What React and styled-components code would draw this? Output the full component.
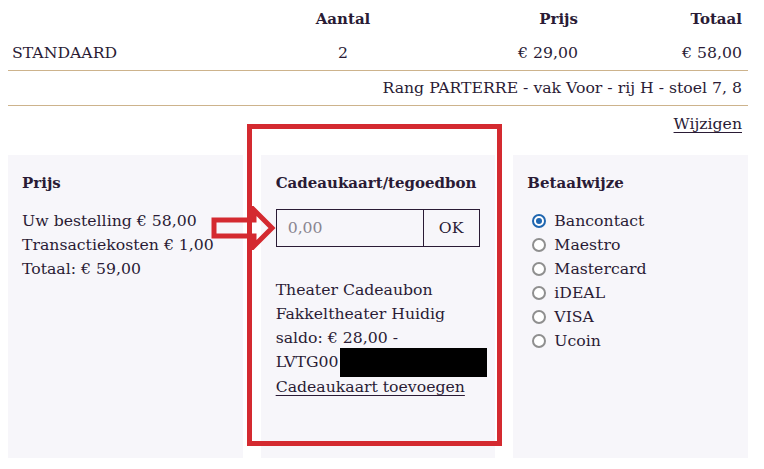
import React from 'react';
import styled, { createGlobalStyle } from 'styled-components';

const GlobalStyle = createGlobalStyle`
  html, body {
    margin: 0;
    padding: 0;
    background: #ffffff;
  }
  body {
    font-family: "DejaVu Serif", "Liberation Serif", serif;
    font-size: 15.7px;
    color: #2a1b35;
  }
`;

const Page = styled.div`
  position: relative;
  width: 764px;
  height: 469px;
  overflow: hidden;
  padding: 0 16px 0 8px;
  box-sizing: border-box;
`;

const OrderRow = styled.div`
  display: grid;
  grid-template-columns: 274px 114px 178px 164px;
  padding: ${p => p.$pad || '5px 6px 5px 4px'};
  line-height: 24px;
  border-bottom: ${p => (p.$line ? '1px solid #cdb38c' : 'none')};
  font-weight: ${p => (p.$head ? 700 : 400)};
  font-size: ${p => (p.$head ? '15px' : 'inherit')};
`;

const Cell = styled.div`
  text-align: ${p => p.$align || 'left'};
  white-space: nowrap;
`;

const InfoRow = styled.div`
  text-align: right;
  line-height: 24px;
  padding: ${p => p.$pad || '5px 6px 5px 4px'};
  border-bottom: ${p => (p.$line ? '1px solid #cdb38c' : 'none')};
`;

const Link = styled.a`
  color: #2a1b35;
  text-decoration: underline;
  text-underline-offset: 3px;
  cursor: pointer;
`;

const Panels = styled.div`
  display: grid;
  grid-template-columns: repeat(3, minmax(0, 1fr));
  gap: 18px;
  margin-top: 19px;
`;

const Panel = styled.div`
  background: #f7f6fa;
  height: 303px;
  padding: 16px 14px 16px ${p => p.$left || '14px'};
  box-sizing: border-box;
  line-height: 24px;
`;

const PanelTitle = styled.div`
  font-weight: 700;
  font-size: 15px;
  margin-bottom: 14px;
`;

const Line = styled.div`
  white-space: nowrap;
`;

const VoucherForm = styled.div`
  display: flex;
  width: 204px;
  height: 38px;
  margin-bottom: 31px;
`;

const VoucherInput = styled.input`
  flex: 1;
  min-width: 0;
  box-sizing: border-box;
  border: 1.5px solid #2a1b35;
  border-right: none;
  background: #f7f6fa;
  padding: 0 11px;
  font: inherit;
  color: #2a1b35;
  &::placeholder {
    color: #8a8590;
  }
`;

const OkButton = styled.button`
  width: 57px;
  box-sizing: border-box;
  border: 1.5px solid #2a1b35;
  background: #f7f6fa;
  font: inherit;
  color: #2a1b35;
  padding: 0;
`;

const Redacted = styled.span`
  display: inline-block;
  width: 147px;
  height: 29px;
  background: #000;
  vertical-align: middle;
  margin: -3px 0 -2px 1px;
`;

const RadioList = styled.div`
  display: flex;
  flex-direction: column;
`;

const RadioLabel = styled.label`
  display: flex;
  align-items: center;
  gap: 8px;
  margin-left: 5px;
  line-height: 24px;
`;

const RadioDot = styled.span`
  width: 14px;
  height: 14px;
  box-sizing: border-box;
  border-radius: 50%;
  border: 2px solid ${p => (p.$on ? '#1f66b0' : '#8f8f8f')};
  background: #fff;
  display: flex;
  align-items: center;
  justify-content: center;
  &::after {
    content: '';
    width: 6px;
    height: 6px;
    border-radius: 50%;
    background: ${p => (p.$on ? '#1f66b0' : 'transparent')};
  }
`;

const Highlight = styled.div`
  position: absolute;
  left: 247px;
  top: 124px;
  width: 255px;
  height: 322px;
  box-sizing: border-box;
  border: 5px solid #d42a30;
  pointer-events: none;
`;

const Arrow = styled.svg`
  position: absolute;
  left: 210px;
  top: 206px;
  pointer-events: none;
`;

const methods = ['Bancontact', 'Maestro', 'Mastercard', 'iDEAL', 'VISA', 'Ucoin'];

export default function App() {
  return (
    <>
      <GlobalStyle />
      <Page>
        <OrderRow $head $pad="7px 6px 5px 4px">
          <Cell />
          <Cell $align="center">Aantal</Cell>
          <Cell $align="right">Prijs</Cell>
          <Cell $align="right">Totaal</Cell>
        </OrderRow>
        <OrderRow $line>
          <Cell>STANDAARD</Cell>
          <Cell $align="center">2</Cell>
          <Cell $align="right">€ 29,00</Cell>
          <Cell $align="right">€ 58,00</Cell>
        </OrderRow>
        <InfoRow $line>Rang PARTERRE - vak Voor - rij H - stoel 7, 8</InfoRow>
        <InfoRow $pad="6px 6px 0 4px">
          <Link>Wijzigen</Link>
        </InfoRow>

        <Panels>
          <Panel>
            <PanelTitle>Prijs</PanelTitle>
            <Line>Uw bestelling € 58,00</Line>
            <Line>Transactiekosten € 1,00</Line>
            <Line>Totaal: € 59,00</Line>
          </Panel>
          <Panel $left="15px">
            <PanelTitle>Cadeaukaart/tegoedbon</PanelTitle>
            <VoucherForm>
              <VoucherInput placeholder="0,00" />
              <OkButton>OK</OkButton>
            </VoucherForm>
            <Line>Theater Cadeaubon</Line>
            <Line>Fakkeltheater Huidig</Line>
            <Line>saldo: € 28,00 -</Line>
            <Line>
              LVTG00<Redacted />
            </Line>
            <Line>
              <Link>Cadeaukaart toevoegen</Link>
            </Line>
          </Panel>
          <Panel>
            <PanelTitle>Betaalwijze</PanelTitle>
            <RadioList>
              {methods.map((m, i) => (
                <RadioLabel key={m}>
                  <RadioDot $on={i === 0} />
                  {m}
                </RadioLabel>
              ))}
            </RadioList>
          </Panel>
        </Panels>

        <Highlight />
        <Arrow width="66" height="44" viewBox="0 0 66 44">
          <path
            d="M4 14 H44 V4 L62 22 L44 40 V30 H4 Z"
            fill="none"
            stroke="#d42a30"
            strokeWidth="5"
            strokeLinejoin="miter"
          />
        </Arrow>
      </Page>
    </>
  );
}
